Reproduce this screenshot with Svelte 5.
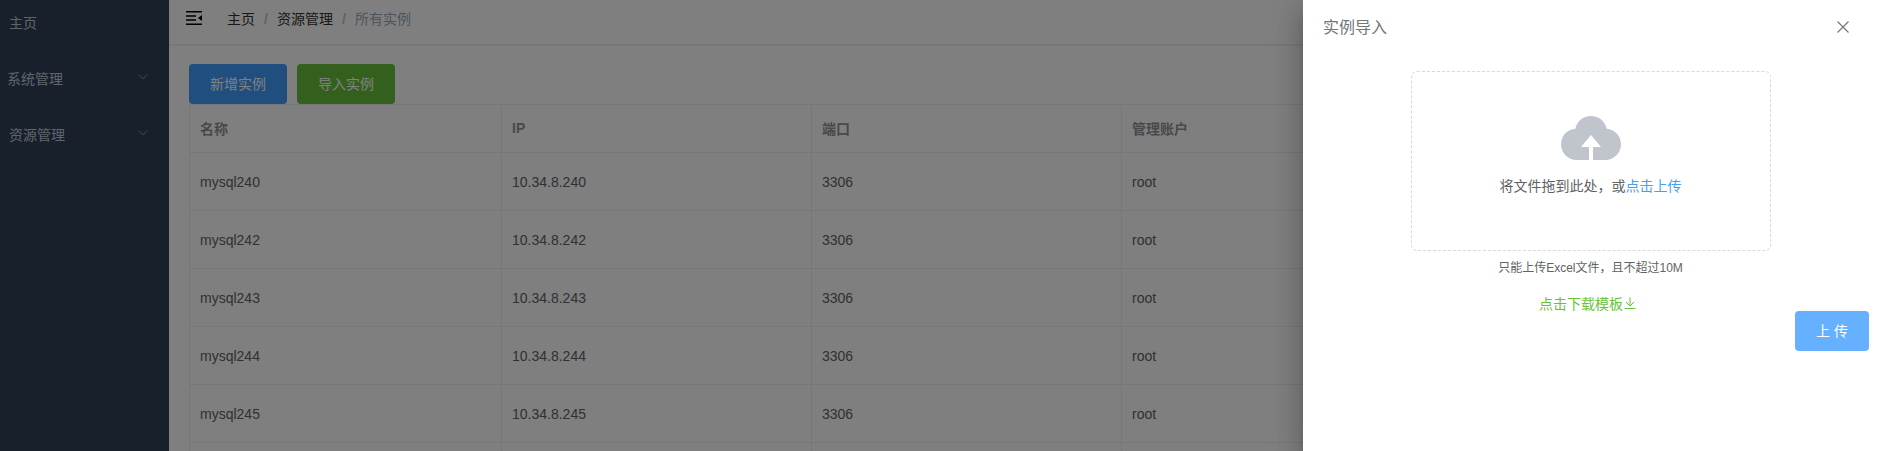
<script>
  const menu = [
    { label: '主页', children: false },
    { label: '系统管理', children: true },
    { label: '资源管理', children: true }
  ];
  const rows = [240, 242, 243, 244, 245].map((n) => ({
    name: `mysql${n}`,
    ip: `10.34.8.${n}`,
    port: '3306',
    user: 'root'
  }));
</script>

<div class="app">
  <aside>
    {#each menu as item, i}
      <div class="item" class:tight={i === 1}>
        <span>{item.label}</span>
        {#if item.children}
          <svg width="12" height="12" viewBox="0 0 12 12"><path d="M1.7 3.6 6 7.800l4.300-4.200" /></svg>
        {/if}
      </div>
    {/each}
  </aside>
  <main>
    <header>
      <svg class="fold" width="16" height="14" viewBox="0 0 16 14">
        <path d="M0 0h16v1.500H0zM0 4.200h10v1.500H0zM0 8.300h10v1.500H0zM0 12.500h16V14H0zM16 4v6l-4-3z" />
      </svg>
      <nav>
        <b>主页</b><i>/</i><b>资源管理</b><i>/</i><span>所有实例</span>
      </nav>
    </header>
    <section>
      <div class="actions">
        <button class="primary">新增实例</button>
        <button class="success">导入实例</button>
      </div>
      <div class="table">
        <div class="row head">
          <div>名称</div><div>IP</div><div>端口</div><div>管理账户</div><div></div>
        </div>
        {#each rows as r}
          <div class="row">
            <div>{r.name}</div><div>{r.ip}</div><div>{r.port}</div><div>{r.user}</div><div></div>
          </div>
        {/each}
        <div class="row">
          <div></div><div></div><div></div><div></div><div></div>
        </div>
      </div>
    </section>
  </main>

  <div class="mask">
    <div class="drawer">
      <div class="title">
        <span>实例导入</span>
        <svg width="12" height="12" viewBox="0 0 12 12"><path d="M.5.5l11 11M11.500.5l-11 11" /></svg>
      </div>
      <div class="drop">
        <svg width="60" height="44" viewBox="0 0 60 44">
          <path d="M14.400 12.800C15.800 5.400 22.200 0 30 0s14.200 5.400 15.600 12.800C53.600 13.200 60 20 60 28.200 60 37 53 44 44.200 44H32V31h8L30 19 20 31h8v13H15.800C7 44 0 37 0 28.200 0 20 6.400 13.200 14.400 12.800z" />
        </svg>
        <p>将文件拖到此处，或<em>点击上传</em></p>
      </div>
      <div class="tip">只能上传Excel文件，且不超过10M</div>
      <div class="link">
        <span>点击下载模板</span>
        <svg width="14" height="14" viewBox="0 0 14 14"><path d="M7 1.500v8.500M3 6l4 4 4-4M1.500 12.500h11" /></svg>
      </div>
      <button class="upload">上 传</button>
    </div>
  </div>
</div>

<style>
  :global(body) {
    margin: 0;
    overflow: hidden;
  }
  .app {
    position: relative;
    display: flex;
    width: 1878px;
    height: 451px;
    overflow: hidden;
    background: #fff;
    color: #606266;
    font: 14px 'Liberation Sans', 'Noto Sans CJK SC', sans-serif;
  }
  aside {
    flex: 0 0 169px;
    box-sizing: border-box;
    background: #304156;
    color: #bfcbd9;
    overflow: hidden;
  }
  .item {
    display: flex;
    align-items: center;
    justify-content: space-between;
    height: 56px;
    padding: 0 20px 0 9px;
  }
  .item:first-child {
    height: 51px;
  }
  .item span {
    margin-top: -2px;
  }
  .item:first-child span {
    margin-top: -7px;
  }
  .item.tight {
    padding-left: 7px;
  }
  .item svg {
    margin-top: -5px;
    fill: none;
    stroke: #909399;
    stroke-width: 1;
  }
  main {
    flex: 1;
    min-width: 0;
  }
  header {
    display: flex;
    align-items: center;
    height: 44px;
    box-sizing: border-box;
    padding: 0 0 6px 17px;
    box-shadow: 0 1px 2px rgba(0, 21, 41, 0.12);
  }
  .fold {
    margin-top: -2px;
  }
  nav {
    display: flex;
    align-items: center;
    margin: -2px 0 0 25px;
    color: #97a8be;
  }
  nav b {
    font-weight: 400;
    color: #303133;
  }
  nav i {
    width: 22px;
    padding-top: 2px;
    text-align: center;
    font-style: normal;
    font-weight: 700;
    color: #c0c4cc;
  }
  section {
    padding: 20px 20px 0;
  }
  .actions {
    display: flex;
    gap: 10px;
  }
  button {
    height: 40px;
    width: 98px;
    padding: 0 0 2px;
    border: 0;
    border-radius: 4px;
    color: #fff;
    font: inherit;
  }
  .primary {
    background: #409eff;
  }
  .success {
    background: #67c23a;
  }
  .table {
    border-top: 1px solid #ebeef5;
    border-left: 1px solid #ebeef5;
  }
  .row {
    display: grid;
    grid-template-columns: 312px 310px 310px 310px 1fr;
    height: 58px;
    box-sizing: border-box;
    border-bottom: 1px solid #ebeef5;
  }
  .row div {
    display: flex;
    align-items: center;
    padding-left: 10px;
    border-right: 1px solid #ebeef5;
  }
  .head {
    height: 48px;
    color: #909399;
    font-weight: 700;
  }
  .head div {
    padding-bottom: 2px;
  }
  .mask {
    position: absolute;
    inset: 0;
    display: flex;
    justify-content: flex-end;
    background: rgba(0, 0, 0, 0.5);
  }
  .drawer {
    display: flex;
    flex-direction: column;
    align-items: center;
    width: 575px;
    box-sizing: border-box;
    background: #fff;
    box-shadow: 0 8px 10px -5px rgba(0, 0, 0, 0.2), 0 16px 24px 2px rgba(0, 0, 0, 0.14),
      0 6px 30px 5px rgba(0, 0, 0, 0.12);
  }
  .title {
    display: flex;
    align-items: center;
    justify-content: space-between;
    align-self: stretch;
    height: 53px;
    padding: 0 29px 0 20px;
    color: #72767b;
    font-size: 16px;
  }
  .title span {
    margin-top: -2px;
  }
  .title svg {
    fill: none;
    stroke: #72767b;
    stroke-width: 1.2;
  }
  .drop {
    display: flex;
    flex-direction: column;
    align-items: center;
    width: 360px;
    height: 180px;
    margin-top: 18px;
    box-sizing: border-box;
    padding-top: 44px;
    border: 1px dashed #d9d9d9;
    border-radius: 6px;
  }
  .drop svg {
    margin-left: 1px;
    fill: #c0c4cc;
  }
  p {
    margin: 16px 0 0;
    line-height: 20px;
  }
  em {
    font-style: normal;
    color: #409eff;
  }
  .tip {
    margin-top: 8px;
    font-size: 12px;
    line-height: 18px;
  }
  .link {
    display: flex;
    align-items: center;
    height: 20px;
    margin: 16px 5px 0 0;
    color: #67c23a;
  }
  .link svg {
    fill: none;
    stroke: #67c23a;
    stroke-width: 1;
  }
  .upload {
    align-self: flex-end;
    width: 74px;
    margin: -2px 9px 0 0;
    background: #66b1ff;
  }
</style>
